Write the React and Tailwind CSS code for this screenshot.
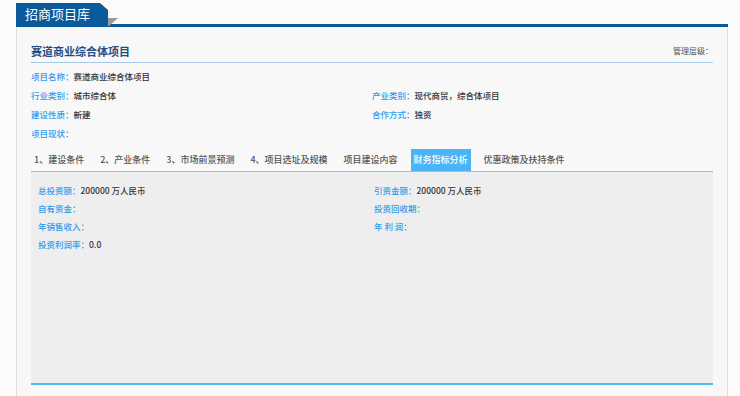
import React from "react";

// --- Project library detail page ---

const infoRows = [
  [{ label: "项目名称：", value: "赛道商业综合体项目" }, null],
  [
    { label: "行业类别：", value: "城市综合体" },
    { label: "产业类别：", value: "现代商贸，综合体项目" },
  ],
  [
    { label: "建设性质：", value: "新建" },
    { label: "合作方式：", value: "独资" },
  ],
  [{ label: "项目现状：", value: "" }, null],
];

const tabs = [
  "1、建设条件",
  "2、产业条件",
  "3、市场前景预测",
  "4、项目选址及规模",
  "项目建设内容",
  "财务指标分析",
  "优惠政策及扶持条件",
];

const financeRows = [
  [
    { label: "总投资额：", value: "200000 万人民币" },
    { label: "引资金额：", value: "200000 万人民币" },
  ],
  [
    { label: "自有资金：", value: "" },
    { label: "投资回收期：", value: "" },
  ],
  [
    { label: "年销售收入：", value: "" },
    { label: "年 利 润：", value: "" },
  ],
  [{ label: "投资利润率：", value: "0.0" }, null],
];

const Field = ({ item }) => {
  if (!item) return <div />;
  return (
    <div className="whitespace-pre font-medium">
      <span className="text-[#2f9bec]">{item.label}</span>
      <span className="text-[#333]">{item.value}</span>
    </div>
  );
};

const App = () => {
  return (
    <div
      className="w-[740px] h-[396px] overflow-hidden bg-[#fbfbfb]"
      style={{ fontFamily: '"Noto Sans CJK SC", "Noto Sans", sans-serif' }}
    >
      {/* Header tab */}
      <div className="flex items-end h-[27px] pl-[16px] pt-[3px]">
        <div className="w-[92px] h-[24px] bg-[#0b5b9c] text-white text-[13px] leading-[22px] pl-[9px] [clip-path:polygon(0_0,84px_0,92px_7px,92px_100%,0_100%)]">
          招商项目库
        </div>
        <div className="relative flex-1 mr-[12px] h-[3px] bg-[#0d5a96]">
          <svg
            className="absolute left-0 -top-[6px]"
            width="10"
            height="8"
            viewBox="0 0 10 8"
          >
            <polygon points="0,0 10,0 1,8 0,8" fill="#9a9a9a" />
          </svg>
        </div>
      </div>

      {/* Panel */}
      <div className="ml-[16px] w-[712px] h-[369px] bg-[#f8f8f8] border-l border-r border-[#dedede] px-[14px]">
        {/* Title */}
        <div className="flex items-center justify-between pt-[15px] pb-[2px] border-b border-[#a9c8e8]">
          <div className="text-[11px] leading-[18px] font-bold text-[#1f4e86]">
            赛道商业综合体项目
          </div>
          <div className="text-[8px] leading-[18px] text-[#555]">
            管理层级：
          </div>
        </div>

        {/* Basic info */}
        <div className="mt-[4px] grid grid-cols-[341px_1fr] text-[8.5px] leading-[19px]">
          {infoRows.map((row, i) => (
            <React.Fragment key={i}>
              <Field item={row[0]} />
              <Field item={row[1]} />
            </React.Fragment>
          ))}
        </div>

        {/* Tabs */}
        <div className="mt-[6px] flex gap-[10px] h-[23px] border-b border-[#8dc4ef] text-[9px]">
          {tabs.map((t) => {
            const active = t === "财务指标分析";
            return (
              <div
                key={t}
                className={`px-[3px] leading-[22px] h-[22px] font-medium ${
                  active ? "bg-[#4cb3f6] text-white" : "text-[#555]"
                }`}
              >
                {t}
              </div>
            );
          })}
        </div>

        {/* Finance content */}
        <div className="h-[213px] bg-[#eeeeee] border-b-2 border-[#4db8fb] pt-[9px] pl-[7px]">
          <div className="grid grid-cols-[336px_1fr] text-[8.5px] leading-[18px]">
            {financeRows.map((row, i) => (
              <React.Fragment key={i}>
                <Field item={row[0]} />
                <Field item={row[1]} />
              </React.Fragment>
            ))}
          </div>
        </div>
      </div>
    </div>
  );
};

export default App;
